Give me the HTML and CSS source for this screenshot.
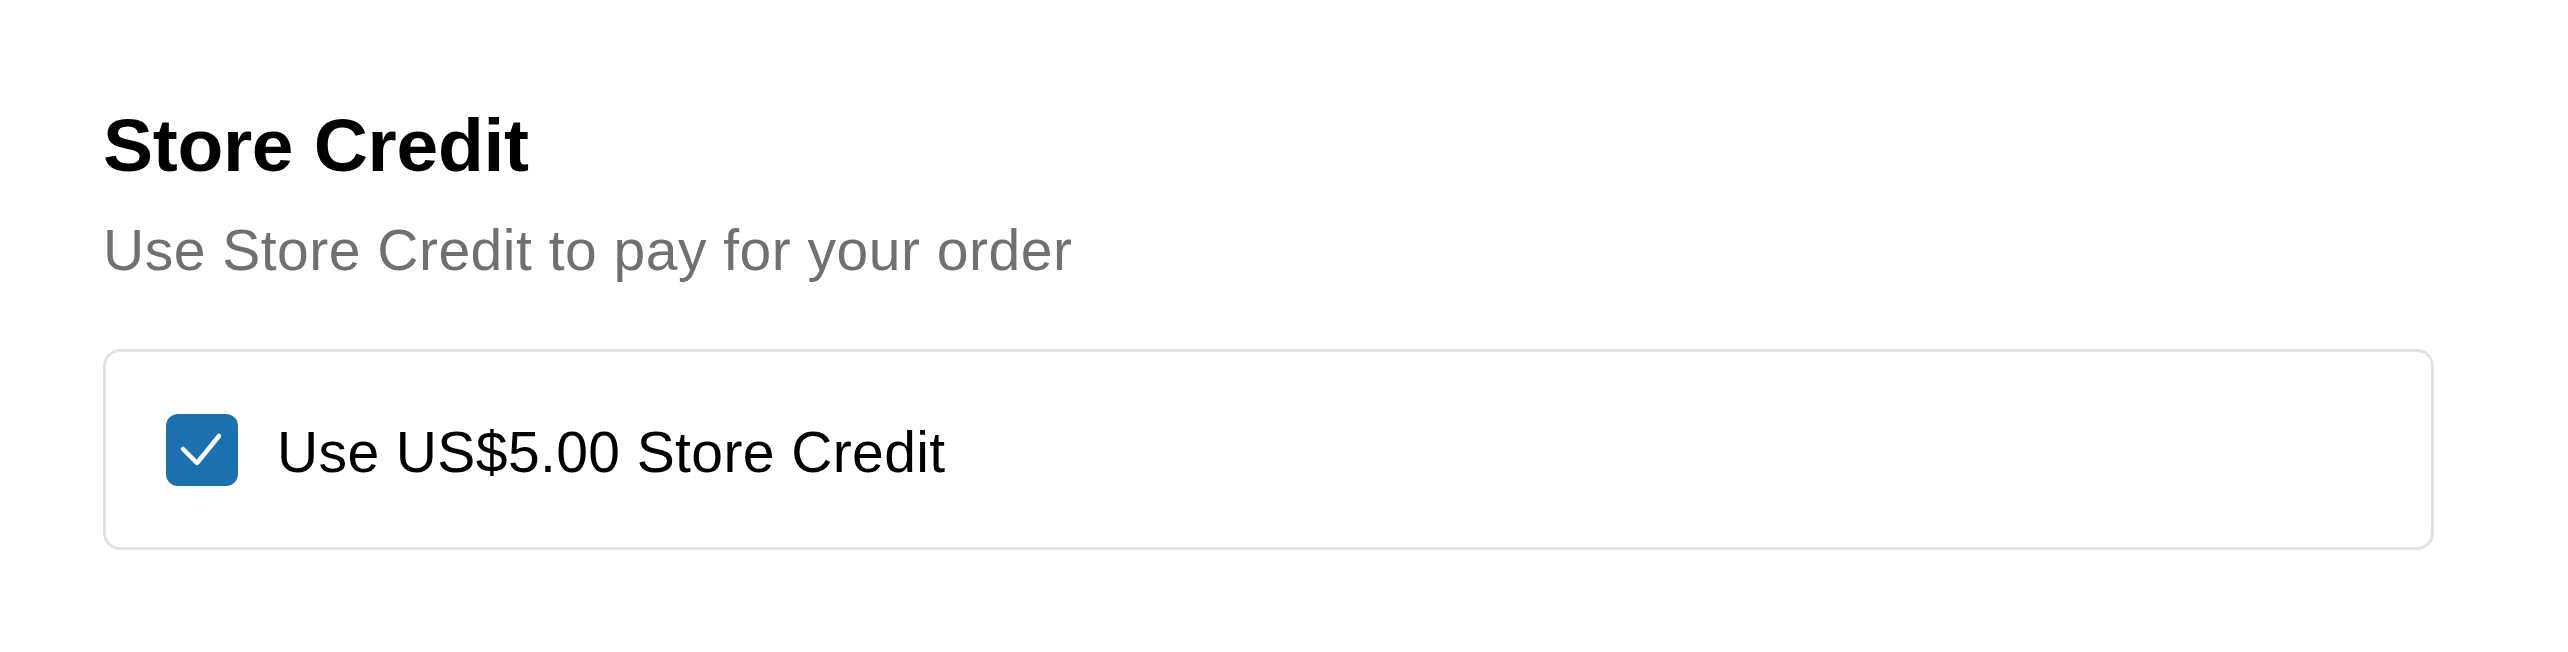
FILE: index.html
```html
<!DOCTYPE html>
<html lang="en">
<head>
    <meta charset="UTF-8">
    <meta name="viewport" content="width=device-width, initial-scale=1.0">
    <title>Store Credit</title>
    <link rel="stylesheet" href="styles.css">
</head>
<body>
    <section class="store-credit">
        <h2 class="section-title">Store Credit</h2>
        <p class="section-subtitle">Use Store Credit to pay for your order</p>

        <label class="credit-option">
            <input type="checkbox" class="credit-input" checked>
            <span class="credit-box">
                <svg viewBox="0 0 72 72" width="72" height="72" aria-hidden="true">
                    <polyline points="17,35 31,49 53,22" fill="none" stroke="#fff" stroke-width="4.5" stroke-linecap="round" stroke-linejoin="round"/>
                </svg>
            </span>
            <span class="credit-label">Use US$5.00 Store Credit</span>
        </label>
    </section>
</body>
</html>
```

FILE: styles.css
```css
* {
    margin: 0;
    padding: 0;
    box-sizing: border-box;
}

body {
    font-family: "Liberation Sans", Arial, sans-serif;
    background: #fff;
    color: #000;
}

.store-credit {
    padding: 100px 134px 0 103px;
}

.section-title {
    font-size: 75px;
    font-weight: 700;
    line-height: 1.2;
    color: #000;
    letter-spacing: -0.3px;
}

.section-subtitle {
    margin-top: 26px;
    font-size: 57px;
    line-height: 1.2;
    color: #707070;
    letter-spacing: 0.5px;
}

.credit-option {
    margin-top: 65px;
    height: 201px;
    display: flex;
    align-items: center;
    gap: 39px;
    padding: 0 60px;
    border: 3px solid #e2e2e2;
    border-radius: 17px;
    background: #fff;
    cursor: pointer;
}

.credit-input {
    display: none;
}

.credit-box {
    width: 72px;
    height: 72px;
    flex-shrink: 0;
    border-radius: 12px;
    background: #1b70b0;
    display: flex;
}

.credit-label {
    font-size: 57px;
    line-height: 1.2;
    color: #000;
    margin-top: 4px;
    letter-spacing: 0.4px;
}
```
